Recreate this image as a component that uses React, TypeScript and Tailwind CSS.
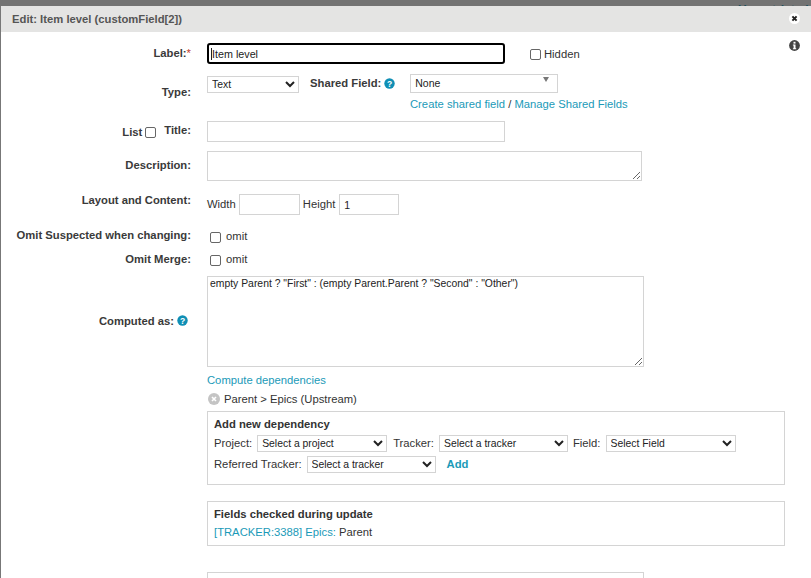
import React from "react";

const Help = ({ className = "" }: { className?: string }) => (
  <svg viewBox="0 0 11 11" className={`w-[11px] h-[11px] ${className}`}>
    <circle cx="5.5" cy="5.5" r="5.2" fill="#0f8fb5" />
    <text x="5.5" y="8.6" textAnchor="middle" fontSize="8.5" fontWeight="700" fill="#fff" fontFamily="Liberation Sans">?</text>
  </svg>
);

const Label = ({ children, className = "" }: { children: React.ReactNode; className?: string }) => (
  <div className={`w-[191px] shrink-0 text-right font-bold text-[#3a3a3a] ${className}`}>{children}</div>
);

const Check = ({ className = "" }: { className?: string }) => (
  <input type="checkbox" className={`appearance-none w-[11px] h-[11px] rounded-[2px] border border-[#666] bg-white shrink-0 ${className}`} />
);

const inputCls = "border border-[#d4d4d4] bg-white px-[4px] text-[10.5px] text-[#222] outline-none";
const selectCls = "border border-[#d4d4d4] bg-white text-[10.4px] text-[#222] h-[17px] outline-none";

export default function App() {
  return (
    <div className="relative w-[811px] h-[578px] overflow-hidden bg-white text-[11.25px] leading-[14px] text-[#333]" style={{ fontFamily: '"Liberation Sans", Arial, sans-serif' }}>
      <div className="h-[6px] bg-[#737373] overflow-hidden relative">
        <span className="absolute left-[738px] top-[3px] text-[12px] font-bold text-[#1d4f5c]">Unrestricted</span>
      </div>
      <div className="ml-px h-[26px] bg-[#e4e4e3] pl-[11px] flex items-center font-bold text-[#555]">
        Edit: Item level (customField[2])
      </div>
      <div className="absolute left-0 top-[6px] bottom-0 w-px bg-[#777]" />
      <svg viewBox="0 0 11 11" className="absolute left-[789px] top-[13px] w-[11px] h-[11px]">
        <circle cx="5.5" cy="5.5" r="5.5" fill="#fff" />
        <path d="M3.4 3.4 7.6 7.6M7.6 3.4 3.4 7.6" stroke="#222" strokeWidth="2" />
      </svg>
      <svg viewBox="0 0 11 11" className="absolute left-[789px] top-[40px] w-[11px] h-[11px]">
        <circle cx="5.5" cy="5.5" r="5.4" fill="#444" />
        <rect x="4.5" y="1.8" width="2" height="1.8" fill="#fff" />
        <path d="M3.9 4.6H6.5V8.2H7.2V9.2H3.9V8.2H4.6V5.6H3.9Z" fill="#fff" />
      </svg>

      <div className="flex flex-col">
        {/* Label */}
        <div className="mt-[11px] flex h-[21px] items-center">
          <Label className="mb-[2px]">
            Label:<span className="text-[#c0392b] font-normal">*</span>
          </Label>
          <div className="relative ml-[16px]">
            <input defaultValue="Item level" className="block w-[298px] h-[21px] rounded-[3px] border-2 border-black px-[3px] text-[10.75px] text-[#222] outline-none" />
            <span className="absolute left-[4px] top-[5px] w-px h-[12px] bg-[#222]" />
          </div>
          <Check className="ml-[25px] mt-px" />
          <span className="ml-[3px] mt-px">Hidden</span>
        </div>

        {/* Type */}
        <div className="mt-[10px] flex h-[38px]">
          <Label className="pt-[11px]">Type:</Label>
          <div className="ml-[16px] flex flex-col">
            <div className="flex">
              <select className={`${selectCls} w-[92px] mt-[2px]`}>
                <option>Text</option>
              </select>
              <div className="ml-[11px] mt-[2px] flex h-[14px] items-center gap-[3px] font-bold text-[#3a3a3a]">
                Shared Field: <Help />
              </div>
              <div className="relative ml-[15px] h-[19px] w-[148px] border border-[#d4d4d4] pl-[4px] pt-[1px] text-[10.5px] text-[#222]">
                None
                <span className="absolute right-[8px] top-[2px] h-0 w-0 border-x-[3px] border-t-[5px] border-x-transparent border-t-[#777]" />
              </div>
            </div>
            <div className="ml-[203px] mt-[4px] whitespace-nowrap text-[#333]">
              <span className="text-[#1a9ab8]">Create shared field</span> / <span className="text-[#1a9ab8]">Manage Shared Fields</span>
            </div>
          </div>
        </div>

        {/* List / Title */}
        <div className="mt-[9px] flex h-[21px]">
          <div className="w-[191px] shrink-0 relative flex justify-end font-bold text-[#3a3a3a]">
            <div className="flex items-start">
              <span className="mt-[4px]">List</span>
              <Check className="ml-[3px] mt-[6px]" />
              <span className="ml-[8px] mt-[2px]">Title:</span>
            </div>
          </div>
          <input className={`${inputCls} ml-[16px] w-[298px] h-[21px]`} />
        </div>

        {/* Description */}
        <div className="mt-[9px] flex h-[30px]">
          <Label className="pt-[7px]">Description:</Label>
          <textarea className={`${inputCls} ml-[16px] w-[435px] h-[30px] block`} />
        </div>

        {/* Layout */}
        <div className="mt-[13px] flex h-[21px]">
          <Label className="-mt-px">Layout and Content:</Label>
          <div className="ml-[16px] flex items-center">
            <span className="mb-[2px]">Width</span>
            <input className={`${inputCls} ml-[3px] w-[61px] h-[21px]`} />
            <span className="ml-[3px] mb-[2px]">Height</span>
            <input defaultValue="1" className={`${inputCls} ml-[4px] w-[60px] h-[21px]`} />
          </div>
        </div>

        {/* Omit suspected */}
        <div className="mt-[14px] flex h-[14px] items-center">
          <Label className="mb-[2px]">Omit Suspected when changing:</Label>
          <Check className="ml-[19px] mt-[2px]" />
          <span className="ml-[5px]">omit</span>
        </div>

        {/* Omit merge */}
        <div className="mt-[10px] flex h-[14px] items-center">
          <Label className="mb-[2px]">Omit Merge:</Label>
          <Check className="ml-[19px]" />
          <span className="ml-[5px] mb-[2px]">omit</span>
        </div>

        {/* Computed */}
        <div className="mt-[9px] flex">
          <div className="w-[191px] shrink-0 flex justify-end items-center gap-[3px] pr-[3px] pb-[2px] h-[91px] font-bold text-[#3a3a3a]">
            Computed as: <Help />
          </div>
          <div className="ml-[16px] flex flex-col w-[578px]">
            <textarea
              defaultValue={'empty Parent ? "First" : (empty Parent.Parent ? "Second" : "Other")'}
              className="block w-[437px] h-[91px] border border-[#d4d4d4] px-[2px] text-[10.4px] leading-[14px] text-[#222] outline-none"
            />
            <span className="mt-[6px] text-[#1a9ab8]">Compute dependencies</span>
            <div className="mt-[5px] flex items-center h-[14px]">
              <svg viewBox="0 0 12 12" className="ml-px w-[12px] h-[12px]">
                <circle cx="6" cy="6" r="6" fill="#c4c4c4" />
                <path d="M4 4 8 8M8 4 4 8" stroke="#fff" strokeWidth="1.6" />
              </svg>
              <span className="ml-[4px]">Parent &gt; Epics (Upstream)</span>
            </div>

            <div className="mt-[5px] h-[74px] border border-[#d4d4d4] pl-[6px] pt-[5px]">
              <div className="font-bold text-[#333]">Add new dependency</div>
              <div className="mt-[4px] flex items-center">
                <span className="mb-[2px]">Project:</span>
                <select className={`${selectCls} ml-[5px] w-[130px]`}><option>Select a project</option></select>
                <span className="ml-[6px] mb-[2px]">Tracker:</span>
                <select className={`${selectCls} ml-[5px] w-[129px]`}><option>Select a tracker</option></select>
                <span className="ml-[5px] mb-[2px]">Field:</span>
                <select className={`${selectCls} ml-[5px] w-[130px]`}><option>Select Field</option></select>
              </div>
              <div className="mt-[4px] flex items-center">
                <span className="mb-[2px]">Referred Tracker:</span>
                <select className={`${selectCls} ml-[5px] w-[129px]`}><option>Select a tracker</option></select>
                <span className="ml-[11px] mb-[2px] font-bold text-[#1a9ab8]">Add</span>
              </div>
            </div>

            <div className="mt-[16px] h-[45px] border border-[#d4d4d4] pl-[6px] pt-[5px]">
              <div className="font-bold text-[#333]">Fields checked during update</div>
              <div className="mt-[4px]">
                <span className="text-[#1a9ab8]">[TRACKER:3388] Epics:</span> Parent
              </div>
            </div>

            <div className="mt-[26px] h-[40px] w-[437px] border border-[#d4d4d4]" />
          </div>
        </div>
      </div>
    </div>
  );
}
